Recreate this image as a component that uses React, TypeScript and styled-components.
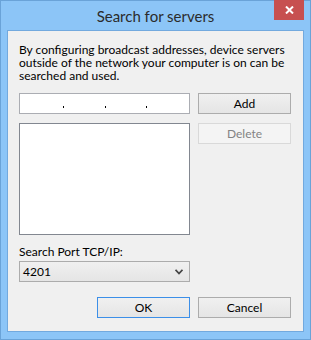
import styled, { createGlobalStyle } from "styled-components";

const GlobalStyle = createGlobalStyle`
  html, body {
    margin: 0;
    padding: 0;
    background: #8cc5f7;
  }
  * {
    box-sizing: border-box;
  }
`;

const Window = styled.div`
  width: 311px;
  height: 340px;
  border: 1px solid #6aa3d8;
  background: #8cc5f7;
  display: flex;
  flex-direction: column;
  padding: 0 6px 7px 6px;
  font-family: Lato, "Segoe UI", "Noto Sans", sans-serif;
`;

const TitleBar = styled.div`
  position: relative;
  height: 29px;
  display: flex;
  align-items: center;
  justify-content: center;
`;

const Title = styled.span`
  font-size: 15px;
  color: #2b2b2b;
  padding-top: 1px;
`;

const CloseButton = styled.div`
  position: absolute;
  top: -1px;
  right: 0;
  width: 30px;
  height: 20px;
  background: #c75050;
  display: flex;
  align-items: center;
  justify-content: center;
`;

const Client = styled.div`
  flex: 1;
  border: 1px solid #72a9de;
  background: #f0f0f0;
  padding: 12px 12px 0 11px;
  display: flex;
  flex-direction: column;
  font-size: 12px;
  color: #000;
`;

const Description = styled.p`
  margin: 0;
  line-height: 13px;
`;

const Row = styled.div<{ $top: number }>`
  display: flex;
  gap: 8px;
  margin-top: ${(p) => p.$top}px;
`;

const IpField = styled.div`
  width: 171px;
  height: 21px;
  border: 1px solid #abadb3;
  background: #fff;
  position: relative;
`;

const IpDot = styled.span<{ $left: number }>`
  position: absolute;
  top: 12px;
  left: ${(p) => p.$left}px;
  width: 1px;
  height: 2px;
  background: #000;
`;

const Button = styled.button<{ $default?: boolean }>`
  width: 93px;
  height: 21px;
  padding: 0;
  font-family: inherit;
  font-size: 12px;
  color: #000;
  border: 1px solid ${(p) => (p.$default ? "#3c8fe8" : "#acacac")};
  background: linear-gradient(#f0f0f0, #e5e5e5);
  &:disabled {
    color: #838383;
    border-color: #d9d9d9;
    background: #f4f4f4;
  }
`;

const ListBox = styled.div`
  width: 171px;
  height: 112px;
  border: 1px solid #828790;
  background: #fff;
`;

const Label = styled.div`
  margin-top: 10px;
  line-height: 13px;
`;

const Combo = styled.div`
  margin-top: 3px;
  width: 171px;
  height: 21px;
  border: 1px solid #acacac;
  background: linear-gradient(#f0f0f0, #e5e5e5);
  display: flex;
  align-items: center;
  justify-content: space-between;
  padding: 0 6px 0 3px;
`;

const Footer = styled.div`
  display: flex;
  justify-content: flex-end;
  gap: 8px;
  margin-top: 15px;
`;

export default function App() {
  return (
    <>
      <GlobalStyle />
      <Window>
        <TitleBar>
          <Title>Search for servers</Title>
          <CloseButton>
            <svg width="9" height="8" viewBox="0 0 9 8">
              <path d="M1 0.5 L8 7.5 M8 0.5 L1 7.5" stroke="#fff" strokeWidth="2" />
            </svg>
          </CloseButton>
        </TitleBar>
        <Client>
          <Description>
            By configuring broadcast addresses, device servers outside of the
            network your computer is on can be searched and used.
          </Description>
          <Row $top={11}>
            <IpField>
              <IpDot $left={43} />
              <IpDot $left={85} />
              <IpDot $left={126} />
            </IpField>
            <Button>Add</Button>
          </Row>
          <Row $top={9}>
            <ListBox />
            <Button disabled>Delete</Button>
          </Row>
          <Label>Search Port TCP/IP:</Label>
          <Combo>
            <span>4201</span>
            <svg width="8" height="6" viewBox="0 0 8 6">
              <path d="M0.5 0.8 L4 4.5 L7.5 0.8" stroke="#444" strokeWidth="1.8" fill="none" />
            </svg>
          </Combo>
          <Footer>
            <Button $default>OK</Button>
            <Button>Cancel</Button>
          </Footer>
        </Client>
      </Window>
    </>
  );
}
